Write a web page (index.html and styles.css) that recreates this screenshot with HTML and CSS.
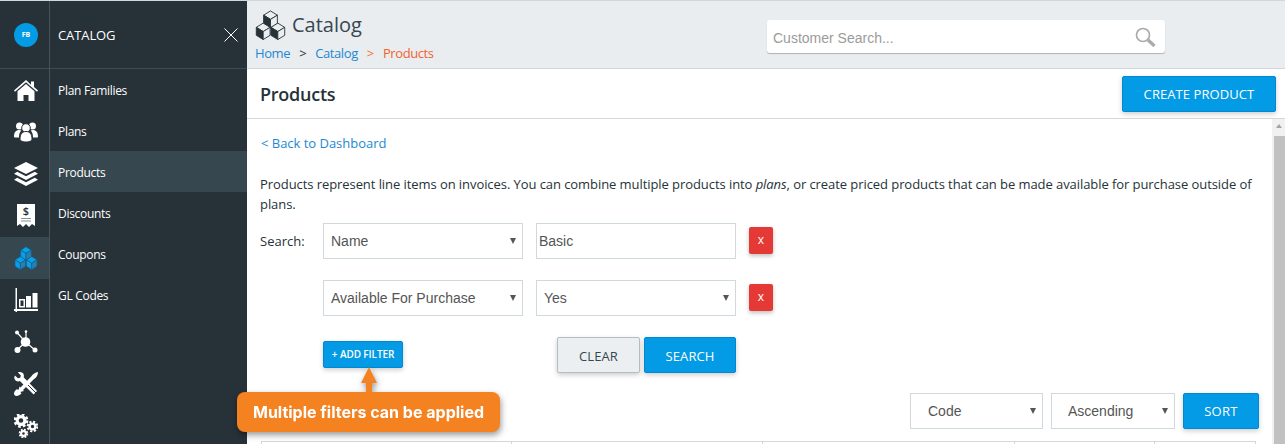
FILE: index.html
```html
<!DOCTYPE html>
<html lang="en">
<head>
<meta charset="utf-8">
<title>Catalog - Products</title>
<link rel="stylesheet" href="styles.css">
</head>
<body>
<svg class="defs" width="0" height="0" aria-hidden="true">
  <symbol id="cubes" viewBox="0 0 36 32" preserveAspectRatio="none">
    <g stroke-width="1" stroke-linejoin="round">
      <path class="c-top" d="M18 1l8 4.500-8 4.500-8-4.500z"/>
      <path class="c-left" d="M10 5.500l8 4.500v9l-8-4.500z"/>
      <path class="c-right" d="M26 5.500l-8 4.500v9l8-4.500z"/>
      <path class="c-top" d="M9.500 14l8 4.500-8 4.500-8-4.500z"/>
      <path class="c-left" d="M1.500 18.500l8 4.500v8.500l-8-4.500z"/>
      <path class="c-right" d="M17.500 18.500l-8 4.500v8.500l8-4.500z"/>
      <path class="c-top" d="M26.500 14l8 4.500-8 4.500-8-4.500z"/>
      <path class="c-left" d="M18.500 18.500l8 4.500v8.500l-8-4.500z"/>
      <path class="c-right" d="M34.500 18.500l-8 4.500v8.500l8-4.500z"/>
    </g>
  </symbol>
</svg>
<div class="app">
  <aside class="rail">
    <div class="rail-top"><span class="avatar">FB</span></div>
    <a class="rail-item">
      <svg width="24" height="21" viewBox="0 0 24 21"><path fill="#fff" d="M12 0L0 10.500l1 1.200L12 2.300l11 9.400 1-1.200-4-3.500V1.500h-3v3.200z"/><path fill="#fff" d="M12 4L3.500 11.300V21h6v-6h5v6h6v-9.700z"/></svg>
    </a>
    <a class="rail-item">
      <svg width="24" height="20" viewBox="0 0 24 20"><g fill="#fff"><circle cx="5.500" cy="4" r="3.500"/><circle cx="18.500" cy="4" r="3.500"/><path d="M0 15c0-5 2-7 5-7 1 0 1.800.2 2.400.6C5.800 10 5 12 5 15.500H1.500C.5 15.500 0 15.300 0 15zM24 15c0-5-2-7-5-7-1 0-1.800.2-2.400.6 1.600 1.400 2.400 3.400 2.400 6.900h3.500c1 0 1.500-.2 1.500-.5z"/><circle cx="12" cy="6" r="4.300" stroke="#273138"/><path d="M6 17c0-5 2.500-7.500 6-7.500S18 12 18 17c0 2-3 3-6 3s-6-1-6-3z" stroke="#273138"/></g></svg>
    </a>
    <a class="rail-item">
      <svg width="24" height="24" viewBox="0 0 24 24"><g fill="#fff"><path d="M12 0l12 6-12 6L0 6z"/><path d="M3.200 9.800L12 14.200l8.800-4.400L24 11.800 12 18 0 11.800z"/><path d="M3.200 15.800L12 20.200l8.800-4.400L24 17.800 12 24 0 17.800z"/></g></svg>
    </a>
    <a class="rail-item">
      <svg width="18" height="24" viewBox="0 0 18 24"><path fill="#fff" d="M0 0h18v22l-3-2-3 3-3-3-3 3-3-3-3 2z"/><text x="9" y="11" text-anchor="middle" class="receipt-text">$</text><path stroke="#8a8f93" stroke-width="1" d="M4 14.500h10M4 17h10"/></svg>
    </a>
    <a class="rail-item rail-active">
      <svg class="cube-blue" width="24" height="24"><use href="#cubes" width="24" height="24"/></svg>
    </a>
    <a class="rail-item">
      <svg width="24" height="24" viewBox="0 0 24 24"><g fill="#fff"><rect x="1.500" y="0" width="1.500" height="24"/><rect x="0" y="21" width="24" height="2"/><path fill-rule="evenodd" d="M5 11h6v8.500H5zM6.500 12.500V18h3v-5.500z"/><rect x="12" y="8" width="5" height="11.500"/><rect x="18.500" y="5" width="5" height="14.500"/></g></svg>
    </a>
    <a class="rail-item">
      <svg width="24" height="24" viewBox="0 0 24 24"><g fill="#fff" stroke="#fff"><path stroke-width="1.200" d="M3 2.500L11.500 12M12 2v10M3 20l8.500-8M21 20l-9.500-8"/><circle cx="3" cy="2.500" r="2" stroke="none"/><circle cx="12" cy="1.500" r="1.300" stroke="none"/><circle cx="3.500" cy="20" r="3" stroke="none"/><circle cx="21" cy="20" r="2.500" stroke="none"/><circle cx="11.500" cy="12" r="4.800" stroke="none"/></g></svg>
    </a>
    <a class="rail-item">
      <svg width="24" height="24" viewBox="0 0 24 24"><g fill="#fff"><path d="M1 3.500l3 3 2.300-.7.700-2.300-3-3C6.500-.5 9.500.5 10 3c.2 1 .1 1.700-.2 2.400L23.500 19.500 20 23 6 9.300C3 10.500-1.500 7.500 1 3.500z" transform="scale(.98)"/><path d="M24 0c0 3-1.500 6-4.500 7.500L9 18l1 1-3 .8-.5.500 1 1C6 23 4 24 2.500 24 1 24 0 23 0 21.500 0 20 1.500 18 3 17l1 1 .8-.8.700-2.700 1 1L17.200 4.500C19 2 21 .5 24 0z"/></g><path stroke="#273138" d="M14 13l8 8"/></svg>
    </a>
    <a class="rail-item">
      <svg width="24" height="24" viewBox="0 0 24 24"><g fill="none" stroke="#fff"><circle cx="7" cy="6.500" r="3.900" stroke-width="3.200"/><circle cx="7" cy="6.500" r="6.200" stroke-width="2.400" stroke-dasharray="2.600 2.270"/><circle cx="18.500" cy="12.500" r="2.900" stroke-width="2.400"/><circle cx="18.500" cy="12.500" r="4.800" stroke-width="2" stroke-dasharray="2.100 1.670"/><circle cx="9.500" cy="19.500" r="2.400" stroke-width="2.200"/><circle cx="9.500" cy="19.500" r="3.900" stroke-width="1.800" stroke-dasharray="1.800 1.260"/></g></svg>
    </a>
  </aside>
  <nav class="nav">
    <div class="nav-top">
      <span>CATALOG</span>
      <svg class="nav-close" width="14" height="14" viewBox="0 0 14 14"><path stroke="#fff" stroke-width="1" d="M.5.500l13 13M13.500.500l-13 13"/></svg>
    </div>
    <a class="nav-item">Plan Families</a>
    <a class="nav-item">Plans</a>
    <a class="nav-item nav-active">Products</a>
    <a class="nav-item">Discounts</a>
    <a class="nav-item">Coupons</a>
    <a class="nav-item">GL Codes</a>
  </nav>
  <main class="main">
    <header class="topbar">
      <div class="brand">
        <div class="brand-title">
          <svg class="cube-dark" width="31" height="30"><use href="#cubes" width="31" height="30"/></svg>
          <span>Catalog</span>
        </div>
        <div class="crumbs"><a class="link">Home</a><span class="sep">&gt;</span><a class="link">Catalog</a><span class="sep sep-hot">&gt;</span><span class="crumb-now">Products</span></div>
      </div>
      <div class="customer-search">
        <span class="cs-text">Customer Search...</span>
        <svg width="21" height="20" viewBox="0 0 21 20"><circle cx="8" cy="8" r="6.500" fill="none" stroke="#aaa" stroke-width="1.700"/><path stroke="#aaa" stroke-width="3.200" d="M13 13l6.500 6"/></svg>
      </div>
    </header>
    <div class="titlebar">
      <h1>Products</h1>
      <button class="btn btn-create">CREATE PRODUCT</button>
    </div>
    <div class="body">
      <div class="content">
        <a class="link back">&lt; Back to Dashboard</a>
        <p class="intro">Products represent line items on invoices. You can combine multiple products into <em>plans</em>, or create priced products that can be made available for purchase outside of plans.</p>
        <div class="filter-row">
          <label class="filter-label">Search:</label>
          <div class="select"><span class="select-val">Name</span></div>
          <input class="text-input" value="Basic">
          <button class="btn-x">x</button>
        </div>
        <div class="filter-row filter-row-2">
          <span class="filter-label"></span>
          <div class="select"><span class="select-val">Available For Purchase</span></div>
          <div class="select"><span class="select-val">Yes</span></div>
          <button class="btn-x">x</button>
        </div>
        <div class="actions">
          <button class="btn btn-add">+ ADD FILTER</button>
          <div class="actions-main">
            <button class="btn btn-clear">CLEAR</button>
            <button class="btn btn-search">SEARCH</button>
          </div>
        </div>
        <div class="sortbar">
          <div class="select select-code"><span class="select-val">Code</span></div>
          <div class="select select-order"><span class="select-val">Ascending</span></div>
          <button class="btn btn-sort">SORT</button>
        </div>
        <div class="table-head">
          <span></span><span></span><span></span><span></span><span></span>
        </div>
      </div>
      <div class="scrollbar"><span class="sb-up"></span><span class="sb-thumb"></span></div>
      <div class="callout">
        <svg class="callout-arrow" width="18" height="26" viewBox="0 0 18 26"><path fill="#f58220" d="M9 0l8 16h-5v10H6V16H1z"/></svg>
        <div class="callout-box">Multiple filters can be applied</div>
      </div>
    </div>
  </main>
</div>
</body>
</html>
```

FILE: styles.css
```css
* { box-sizing: border-box; }
html, body { margin: 0; height: 100%; overflow: hidden; background: #fff; }
body { font-family: "Open Sans", "Noto Sans", sans-serif; font-size: 13px; color: #263238; border-top: 1px solid #cfd8dc; }
.defs { position: absolute; }
.app { display: flex; height: 443px; }

.rail { width: 50px; flex: none; background: #273138; border-right: 1px solid #44535e; display: flex; flex-direction: column; }
.rail-top { height: 68px; flex: none; border-bottom: 1px solid #3d4b55; display: flex; align-items: center; justify-content: center; padding-left: 3px; }
.avatar { width: 24px; height: 24px; border-radius: 50%; background: #039be5; color: #fff; font-size: 7px; font-weight: 700; display: flex; align-items: center; justify-content: center; }
.rail-item { height: 42px; flex: none; display: flex; align-items: center; justify-content: center; padding-left: 3px; }
.rail-active { background: #37474f; }
.receipt-text { font-family: "Open Sans", sans-serif; font-size: 11px; font-weight: 600; fill: #263238; }
.cube-blue { --t: #0a9fe8; --l: #0a9fe8; --r: #2b7fae; stroke: #0f5f8c; }
.cube-dark { --t: #eceff1; --l: #263238; --r: #eceff1; stroke: #263238; }
.c-top { fill: var(--t); }
.c-left { fill: var(--l); }
.c-right { fill: var(--r); }

.nav { width: 197px; flex: none; background: #273138; color: #fff; display: flex; flex-direction: column; }
.nav-top { height: 68px; flex: none; border-bottom: 1px solid #3d4b55; display: flex; align-items: center; justify-content: space-between; padding: 0 9px 0 8px; font-size: 13px; letter-spacing: -.1px; }
.nav-item { height: 41px; flex: none; display: flex; align-items: center; padding: 2px 0 0 8px; font-size: 12px; letter-spacing: -.3px; }
.nav-active { background: #37474f; }

.main { flex: 1; min-width: 0; display: flex; flex-direction: column; }
.topbar { height: 68px; flex: none; background: #eaedf0; border-bottom: 1px solid #cfd8dc; display: flex; padding: 9px 0 0 8px; }
.brand { width: 512px; flex: none; }
.brand-title { display: flex; align-items: center; gap: 6px; font-size: 20px; line-height: 30px; color: #37474f; }
.crumbs { display: flex; margin-top: 4px; font-size: 13px; line-height: 18px; letter-spacing: -.4px; }
.link { color: #1e88d0; }
.sep { margin: 0 9px; color: #263238; }
.sep-hot { color: #f4742a; }
.crumb-now { color: #f2622e; }
.customer-search { width: 398px; height: 33px; margin-top: 10px; background: #fff; border-radius: 3px; box-shadow: 0 1px 1px rgba(0,0,0,.25); display: flex; align-items: center; justify-content: space-between; padding: 2px 9px 0 6px; font-family: "Liberation Sans", Arial, sans-serif; font-size: 14px; color: #9b9b9b; }
.customer-search svg { margin-top: -2px; }

.titlebar { height: 50px; flex: none; border-bottom: 1px solid #cfd8dc; display: flex; align-items: center; justify-content: space-between; padding: 1px 9px 0 13px; }
h1 { margin: 0; font-size: 18px; font-weight: 600; color: #263238; letter-spacing: -.25px; }
.btn { border: 1px solid #0288d1; background: #039be5; color: #fff; font-family: "Open Sans", sans-serif; border-radius: 2px; box-shadow: 0 2px 5px rgba(0,0,0,.2); padding: 0; }
.btn-create { width: 154px; height: 36px; font-size: 13px; letter-spacing: .08px; }

.body { flex: 1; min-height: 0; display: flex; position: relative; }
.content { flex: 1; min-width: 0; padding: 15px 13px 0 14px; overflow: hidden; }
.back { display: block; line-height: 18px; font-size: 13px; letter-spacing: -.02px; }
.intro { margin: 22px 0 0 -1px; width: 996px; line-height: 20px; font-size: 13px; letter-spacing: -.07px; color: #263238; }
.filter-row { display: flex; align-items: flex-start; gap: 13px; margin: 9px 0 0 -1px; }
.filter-row-2 { margin-top: 21px; }
.filter-label { width: 50px; font-size: 13px; line-height: 36px; letter-spacing: 0; white-space: nowrap; }
.select { position: relative; width: 200px; height: 36px; border: 1px solid #cfd8dc; background: #fff; display: flex; align-items: center; padding-left: 7px; font-family: "Liberation Sans", Arial, sans-serif; font-size: 14px; color: #555; }
.select::after { content: ""; position: absolute; right: 6px; top: 14px; border-left: 3.500px solid transparent; border-right: 3.500px solid transparent; border-top: 6px solid #555; }
.text-input { width: 200px; height: 36px; border: 1px solid #cfd8dc; padding: 0 2px; font-family: "Liberation Sans", Arial, sans-serif; font-size: 14px; color: #555; outline: none; }
.btn-x { width: 24px; height: 27px; margin-top: 4px; background: #e53935; border: 0; border-radius: 2px; color: #fff; font-family: "Open Sans", sans-serif; font-size: 12px; padding: 0 0 2px; box-shadow: 0 2px 4px rgba(0,0,0,.25); }
.actions { display: flex; align-items: flex-start; margin: 21px 0 0 62px; height: 36px; }
.btn-add { width: 80px; height: 27px; margin-top: 4px; padding-bottom: 2px; font-size: 10px; font-weight: 600; letter-spacing: -.1px; }
.actions-main { display: flex; gap: 4px; margin-left: 154px; }
.btn-clear { width: 83px; height: 36px; padding-top: 1px; background: #eceff1; border-color: #b0bec5; color: #37474f; font-size: 13px; letter-spacing: .1px; }
.btn-search { width: 92px; height: 36px; padding-top: 1px; font-size: 13px; letter-spacing: .13px; }
.sortbar { display: flex; justify-content: flex-end; gap: 8px; margin-top: 20px; }
.select-code { width: 133px; padding-left: 17px; }
.select-order { width: 124px; padding-left: 16px; }
.btn-sort { width: 76px; height: 36px; font-size: 13px; letter-spacing: .3px; }
.table-head { display: grid; grid-template-columns: 250px 251px 252px 140px 102px; width: 995px; height: 40px; margin-top: 12px; border: 1px solid #cfd8dc; }
.table-head span { border-right: 1px solid #cfd8dc; }
.table-head span:last-child { border-right: 0; }

.scrollbar { width: 13px; flex: none; background: #f1f1f1; position: relative; display: flex; flex-direction: column; align-items: flex-end; padding-top: 5px; }
.sb-up { align-self: center; width: 0; height: 0; border-left: 3.500px solid transparent; border-right: 3.500px solid transparent; border-bottom: 4px solid #a3a3a3; }
.sb-thumb { width: 11px; flex: 1; margin-top: 8px; background: #c1c1c1; }

.callout { position: absolute; left: -10px; top: 248px; width: 263px; filter: drop-shadow(1px 3px 3px rgba(0,0,0,.4)); }
.callout-arrow { position: absolute; left: 123px; top: 0; }
.callout-box { margin-top: 25px; width: 263px; height: 40px; background: #f58220; border-radius: 8px; color: #fff; font-family: "Inter", sans-serif; font-weight: 700; font-size: 16px; display: flex; align-items: center; justify-content: center; }
```
